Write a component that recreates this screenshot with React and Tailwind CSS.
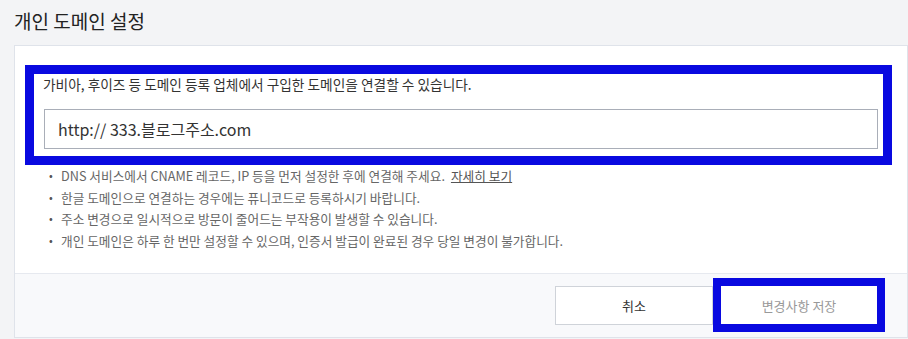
import React, { useState } from 'react';

const notes = [
    'DNS 서비스에서 CNAME 레코드, IP 등을 먼저 설정한 후에 연결해 주세요.',
    '한글 도메인으로 연결하는 경우에는 퓨니코드로 등록하시기 바랍니다.',
    '주소 변경으로 일시적으로 방문이 줄어드는 부작용이 발생할 수 있습니다.',
    '개인 도메인은 하루 한 번만 설정할 수 있으며, 인증서 발급이 완료된 경우 당일 변경이 불가합니다.',
];

const App = () => {
    const [domain, setDomain] = useState('http:// 333.블로그주소.com');

    return (
        <div
            className="w-[908px] h-[339px] overflow-hidden bg-[#f3f4f6] pl-[14px] text-[#333]"
            style={{ fontFamily: '"Noto Sans CJK KR", "Noto Sans", sans-serif' }}
        >
            {/* Title */}
            <h1 className="h-[45px] pt-[7px] text-[19px] leading-[27px] text-[#222] font-normal">
                개인 도메인 설정
            </h1>

            {/* Card */}
            <div className="border border-[#dfe3ea] bg-white">
                <div className="pt-[19px] pl-[10px] pr-[15px] pb-[21px]">
                    {/* Highlighted input area */}
                    <div className="border-[9px] border-[#0909e0] bg-white pt-[1px] pl-[9px] pr-[4px] pb-[7px]">
                        <p className="text-[13.7px] leading-[18px] text-[#333]">
                            가비아, 후이즈 등 도메인 등록 업체에서 구입한 도메인을 연결할 수 있습니다.
                        </p>
                        <input
                            type="text"
                            value={domain}
                            onChange={(e) => setDomain(e.target.value)}
                            className="mt-[16px] ml-[1px] block w-[834px] h-[40px] border border-[#a9aeb8] px-[13px] text-[16px] text-[#333] outline-none"
                        />
                    </div>

                    {/* Notes */}
                    <ul className="ml-[21px] text-[12.7px] leading-[21.7px] text-[#666]">
                        {notes.map((note, i) => (
                            <li key={i} className="flex">
                                <span className="w-[15px] shrink-0 pl-[3px] text-[11px] text-[#555]">•</span>
                                <span>
                                    {note}
                                    {i === 0 && (
                                        <a href="#" className="ml-[6px] underline text-[#555]">
                                            자세히 보기
                                        </a>
                                    )}
                                </span>
                            </li>
                        ))}
                    </ul>
                </div>

                {/* Footer */}
                <div className="h-[64px] border-t border-[#e6e9ef] bg-[#f8f9fb] flex items-center justify-end pr-[22px]">
                    <button className="w-[158px] h-[39px] border border-[#cfd3d9] bg-white text-[13px] text-[#333]">
                        취소
                    </button>
                    <div className="border-[8px] border-[#0909e0]">
                        <button
                            disabled
                            className="block w-[156px] h-[38px] bg-white text-[13px] text-[#999]"
                        >
                            변경사항 저장
                        </button>
                    </div>
                </div>
            </div>
        </div>
    );
};

export default App;
